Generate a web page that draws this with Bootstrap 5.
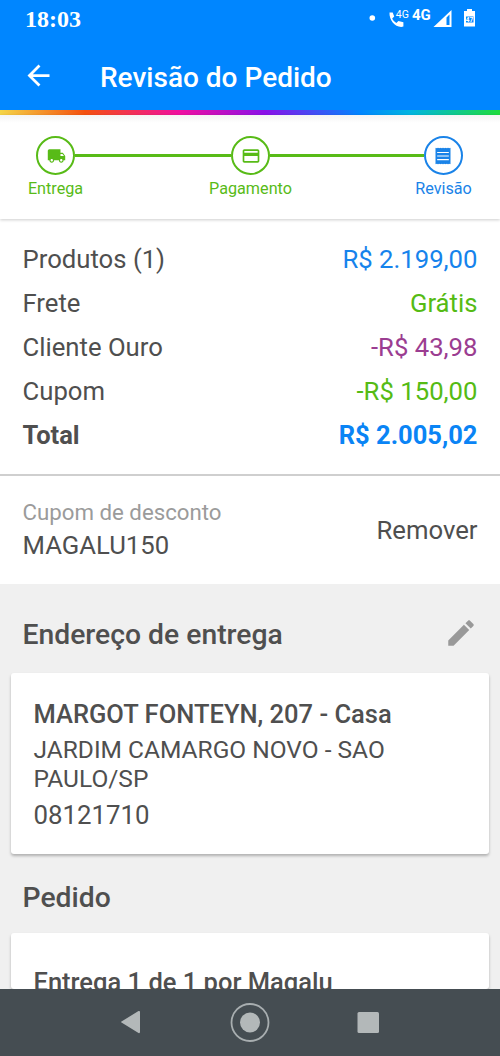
<!DOCTYPE html>
<html lang="pt-BR">
<head>
<meta charset="utf-8">
<meta name="viewport" content="width=device-width, initial-scale=1">
<title>Revisão do Pedido</title>
<link href="https://cdn.jsdelivr.net/npm/bootstrap@5.3.0/dist/css/bootstrap.min.css" rel="stylesheet">
<style>
:root { --azul: #0086ff; --verde: #58bb17; --texto: #4f4f4f; }
body { height: 1056px; font-family: Roboto, sans-serif; color: var(--texto); background: #f0f0f0; line-height: 1.2; }
svg { display: block; flex: none; }
.topo { background: var(--azul); height: 110px; }
.status { height: 38px; padding: 0 24px 0 25px; }
.hora { font: bold 24px/38px "Liberation Serif", serif; }
.voltar { margin: -4px 45px 0 22px; }
.titulo { font-size: 28px; font-weight: 500; line-height: 79px; }
.faixa { height: 5px; background: linear-gradient(90deg, #f5d547 0, #f4500f 17%, #f00fa0 36%, #8a10e8 53%, #0086ff 72%, #00b4e0 82%, #1fdc3c 100%); }
.etapas { height: 104px; padding: 21px 37px 0 36px; background: linear-gradient(#f4f4f4, #fff 8px); box-shadow: 0 1px 3px #0003; }
.etapa { width: 39px; color: var(--verde); font-size: 16.2px; white-space: nowrap; }
.bola { width: 39px; height: 39px; border: 2px solid; background: #fff; flex: none; }
.linha { height: 3px; margin-top: 18px; background: var(--verde); }
.atual { color: #1a83e8; }
.etapa span { margin-top: 4px; }
.resumo { padding: 19px 22.5px 16px; font-size: 25.7px; height: 255px; }
.resumo .d-flex { height: 43.8px; }
.resumo .fw-bold { font-size: 25.5px; }
.cupom { height: 110px; padding: 0 22.5px; border-top: 2px solid #cfcfcf; font-size: 25.7px; }
.rotulo { font-size: 22.25px; color: #9b9b9b; line-height: 32px; margin-top: -3px; }
.codigo { line-height: 34px; margin-top: 0; }
.secao { font-size: 28.3px; font-weight: 500; padding: 0 22px 0 22.5px; }
.lapis { margin-top: -4px; }
.cartao { margin: 0 11px; padding: 22px 22.500px; border: 0; border-radius: 3px; box-shadow: 0 2px 3px #0004; color: inherit; }
.forte { font-size: 25.5px; font-weight: 500; line-height: 38px; }
.bairro { font-size: 24.5px; line-height: 28.5px; margin-top: 3px; }
.cep { font-size: 25.8px; line-height: 30px; margin-top: 7px; }
.sistema { height: 67px; background: #454d52; }
</style>
</head>
<body class="d-flex flex-column overflow-hidden">
<header class="topo text-white flex-shrink-0">
  <div class="status d-flex align-items-center justify-content-between">
    <span class="hora">18:03</span>
    <svg width="110" height="30" viewBox="366 4 110 30" fill="#fff">
      <circle cx="372.3" cy="18" r="2.8"/>
      <path d="M389.500 12.500h3.200l1.500 4.100-2 2c1 2 2.200 3.300 4.200 4.300l2-2 5 1.400v4.300C396 28.500 389 20.500 389.500 12.500z"/>
      <text x="395.800" y="18" font-size="10.500">4G</text>
      <text x="412" y="20" font-size="15" font-weight="700">4G</text>
      <path fill-rule="evenodd" d="M433.500 27L451.500 10V27zM446.500 17.500V25h3V14.500z"/>
      <path fill-rule="evenodd" d="M467 9h5v2h3v15.500h-11V11h3zM466 16.500v6h7.500v-6z"/>
      <text x="465.800" y="22" font-size="6.500" font-weight="700">47</text>
    </svg>
  </div>
  <div class="d-flex align-items-center">
    <svg class="voltar" width="33" height="33" viewBox="0 0 24 24" fill="#fff"><path d="M20 11H7.830l5.590-5.590L12 4l-8 8 8 8 1.410-1.410L7.830 13H20v-2z"/></svg>
    <h1 class="titulo mb-0">Revisão do Pedido</h1>
  </div>
</header>
<div class="faixa flex-shrink-0"></div>
<nav class="etapas d-flex flex-shrink-0 position-relative">
  <div class="etapa d-flex flex-column align-items-center">
    <div class="bola rounded-circle d-flex align-items-center justify-content-center">
      <svg style="margin-left:2px" width="19" height="20" viewBox="0 0 24 24" preserveAspectRatio="none" fill="currentColor"><path d="M20 8h-3V4H3c-1.100 0-2 .9-2 2v11h2c0 1.660 1.340 3 3 3s3-1.340 3-3h6c0 1.660 1.340 3 3 3s3-1.340 3-3h2v-5l-3-4zM6 18.500c-.83 0-1.500-.67-1.500-1.500s.67-1.500 1.500-1.500 1.500.67 1.500 1.500-.67 1.500-1.500 1.500zm13.500-9l1.960 2.500H17V9.500h2.500zm-1.500 9c-.83 0-1.500-.67-1.500-1.500s.67-1.500 1.500-1.500 1.500.67 1.500 1.500-.67 1.500-1.500 1.500z"/></svg>
    </div>
    <span>Entrega</span>
  </div>
  <div class="linha flex-grow-1" style="flex-basis:2px"></div>
  <div class="etapa d-flex flex-column align-items-center">
    <div class="bola rounded-circle d-flex align-items-center justify-content-center">
      <svg width="20" height="20" viewBox="0 0 24 24" fill="currentColor"><path d="M20 4H4c-1.110 0-1.990.89-1.990 2L2 18c0 1.110.89 2 2 2h16c1.110 0 2-.89 2-2V6c0-1.110-.89-2-2-2zm0 14H4v-6h16v6zm0-10H4V6h16v2z"/></svg>
    </div>
    <span>Pagamento</span>
  </div>
  <div class="linha flex-grow-1" style="flex-basis:0"></div>
  <div class="etapa atual d-flex flex-column align-items-center">
    <div class="bola rounded-circle d-flex align-items-center justify-content-center">
      <svg style="margin-right:2px" width="20" height="20" viewBox="0 0 24 24" fill="currentColor"><path d="M19 17H5v-1.300h14v1.300zm0-4.300H5v-1.300h14v1.300zm0-4.300H5V7.100h14v1.300zM3 22l1-.8 1 .8 1-.8 1 .8 1-.8 1 .8 1-.8 1 .8 1-.8 1 .8 1-.8 1 .8 1-.8 1 .8 1-.8 1 .8 1-.8 1 .8V2l-1 .8-1-.8-1 .8-1-.8-1 .8-1-.8-1 .8-1-.8-1 .8-1-.8-1 .8-1-.8-1 .8-1-.8-1 .8-1-.8-1 .8-1-.8v20z"/></svg>
    </div>
    <span>Revisão</span>
  </div>
</nav>
<section class="resumo bg-white flex-shrink-0">
  <div class="d-flex align-items-center justify-content-between"><span>Produtos (1)</span><span style="color:#1683ec">R$ 2.199,00</span></div>
  <div class="d-flex align-items-center justify-content-between"><span>Frete</span><span style="color:#55bb14">Grátis</span></div>
  <div class="d-flex align-items-center justify-content-between"><span>Cliente Ouro</span><span style="color:#9b3d91">-R$ 43,98</span></div>
  <div class="d-flex align-items-center justify-content-between"><span>Cupom</span><span style="color:#55bb14">-R$ 150,00</span></div>
  <div class="d-flex align-items-center justify-content-between fw-bold"><span>Total</span><span style="color:#0a84f5">R$ 2.005,02</span></div>
</section>
<section class="cupom bg-white d-flex align-items-center justify-content-between flex-shrink-0">
  <div><div class="rotulo">Cupom de desconto</div><div class="codigo">MAGALU150</div></div>
  <span>Remover</span>
</section>
<div class="secao d-flex align-items-center justify-content-between flex-shrink-0" style="height:89px;padding-top:13px">
  <span>Endereço de entrega</span>
  <svg class="lapis" width="34" height="34" viewBox="0 0 24 24" fill="#999"><path d="M3 17.250V21h3.750L17.810 9.940l-3.750-3.750L3 17.250zM20.710 7.040c.39-.39.39-1.020 0-1.410l-2.340-2.340c-.39-.39-1.020-.39-1.410 0l-1.830 1.830 3.750 3.750 1.830-1.830z"/></svg>
</div>
<div class="card cartao flex-shrink-0" style="height:181px">
  <div class="forte">MARGOT FONTEYN, 207 - Casa</div>
  <div class="bairro">JARDIM CAMARGO NOVO - SAO<br>PAULO/SP</div>
  <div class="cep">08121710</div>
</div>
<div class="secao d-flex align-items-center flex-shrink-0" style="height:79px;padding-top:9px">Pedido</div>
<div class="card cartao flex-shrink-0" style="height:56px;padding-top:30px">
  <div class="forte">Entrega 1 de 1 por Magalu</div>
</div>
<footer class="sistema flex-shrink-0 position-relative">
  <svg width="500" height="67" viewBox="0 989 500 67" fill="#b3b8b9">
    <path d="M121.500 1021.500l17-10.500q1.500-.5 1.500 1v20q0 1.500-1.500 1l-17-10.500q-1-.5 0-1z"/>
    <circle cx="250" cy="1022.500" r="18.500" fill="none" stroke="#a8aeb0" stroke-width="1.800"/>
    <circle cx="250" cy="1022.500" r="10"/>
    <rect x="357.500" y="1012" width="21.500" height="21" rx="1.500"/>
  </svg>
</footer>
<script src="https://cdn.jsdelivr.net/npm/bootstrap@5.3.0/dist/js/bootstrap.bundle.min.js"></script>
</body>
</html>
